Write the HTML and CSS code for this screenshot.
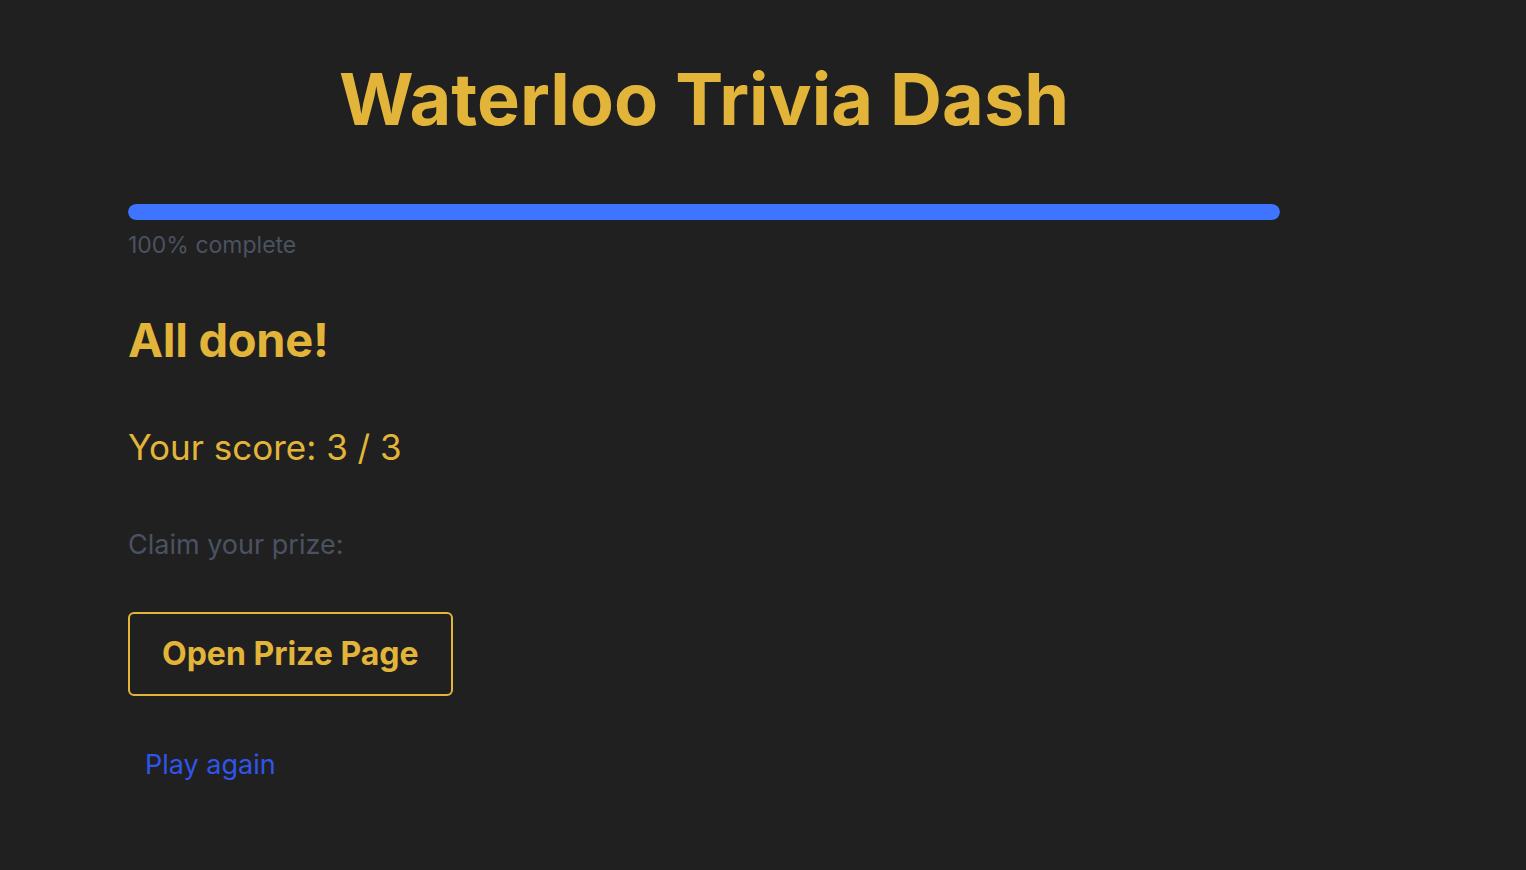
FILE: index.html
```html
<!DOCTYPE html>
<html lang="en">
<head>
    <meta charset="UTF-8">
    <meta name="viewport" content="width=device-width, initial-scale=1.0">
    <title>Waterloo Trivia Dash</title>
    <link rel="stylesheet" href="styles.css">
</head>
<body>

<div class="container">
    <h1>Waterloo Trivia Dash</h1>

    <div class="progress">
        <div class="progress-fill" style="width: 100%"></div>
    </div>
    <p class="progress-label">100% complete</p>

    <div class="results">
        <h2>All done!</h2>
        <p class="score">Your score: 3 / 3</p>
        <p class="claim">Claim your prize:</p>
        <button class="prize-btn">Open Prize Page</button>
        <button class="link-btn">Play again</button>
    </div>
</div>

</body>
</html>
```

FILE: styles.css
```css
/* Base body styling */
body {
    font-family: 'Inter', 'Liberation Sans', sans-serif;
    margin: 0;
    padding: 0;
    background-color: #202020;
    color: #e2b53a;
}

/* Container styling */
.container {
    width: 1152px;
    margin: 0 0 0 128px;
    padding-top: 55px;
}

h1 {
    margin: 0;
    text-align: center;
    font-size: 72px;
    font-weight: 700;
    letter-spacing: 0;
    color: #e2b53a;
}

/* Progress bar */
.progress {
    margin-top: 62px;
    height: 16px;
    border-radius: 8px;
    background-color: #2c2c2c;
    overflow: hidden;
}

.progress-fill {
    height: 100%;
    background-color: #3f74ff;
    border-radius: 8px;
}

.progress-label {
    margin: 11px 0 0;
    font-size: 23px;
    color: #4b5261;
}

/* Results section */
.results h2 {
    margin: 52px 0 0;
    font-size: 47px;
    font-weight: 700;
    letter-spacing: -0.3px;
}

.score {
    margin: 58px 0 0;
    font-size: 35px;
}

.claim {
    margin: 60px 0 0;
    font-size: 27px;
    color: #4b5261;
}

/* Buttons */
.prize-btn {
    display: block;
    margin-top: 51px;
    padding: 22px 32px;
    background: transparent;
    border: 2px solid #e2b53a;
    border-radius: 6px;
    color: #e2b53a;
    font-family: inherit;
    font-size: 32px;
    font-weight: 700;
    line-height: 36px;
    cursor: pointer;
}

.link-btn {
    display: block;
    margin-top: 36px;
    padding: 16px 17px;
    background: transparent;
    border: none;
    color: #2f55ea;
    font-family: inherit;
    font-size: 27px;
    cursor: pointer;
}
```
